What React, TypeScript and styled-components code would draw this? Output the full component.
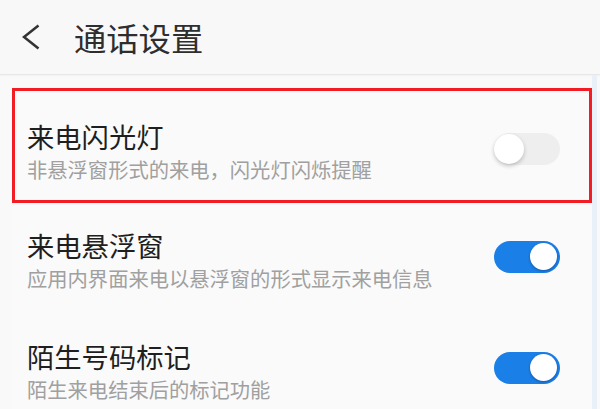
import React from "react";
import styled, { createGlobalStyle } from "styled-components";

const GlobalStyle = createGlobalStyle`
  html, body {
    margin: 0;
    padding: 0;
    background: #f9f9f9;
  }
  body {
    font-family: "Noto Sans CJK SC", "Noto Sans", "Liberation Sans", sans-serif;
  }
`;

const Screen = styled.div`
  width: 600px;
  height: 409px;
  overflow: hidden;
  display: flex;
  flex-direction: column;
  background: #f9f9f9;
`;

const Header = styled.header`
  height: 74px;
  flex: none;
  display: flex;
  align-items: center;
  padding-left: 22px;
  background: #f8f8f8;
  border-bottom: 1px solid #e7e7e7;
  box-shadow: 0 1px 2px rgba(0, 0, 0, 0.03);
`;

const BackIcon = styled.svg`
  width: 18px;
  height: 26px;
  flex: none;
  display: block;
`;

const Title = styled.h1`
  margin: 0 0 0 34px;
  font-size: 32.3px;
  line-height: 1;
  font-weight: 400;
  color: #2e2e2e;
`;

const Body = styled.div`
  flex: 1;
  display: flex;
  min-height: 0;
`;

const List = styled.div`
  flex: 1;
  display: flex;
  flex-direction: column;
  padding: 13px 0 0 12px;
`;

const ScrollStrip = styled.div`
  width: 5px;
  flex: none;
  margin-right: 3px;
  background: #eaf0f8;
`;

const Row = styled.div<{ $highlight?: boolean }>`
  display: flex;
  align-items: center;
  justify-content: space-between;
  padding: ${(p) => (p.$highlight ? "32px 32px 22px 15px" : "26px 32px 24px 15px")};
  background: #fafafa;
  outline: ${(p) => (p.$highlight ? "3px solid #f21d24" : "none")};
  outline-offset: -3px;
`;

const TextBlock = styled.div`
  display: flex;
  flex-direction: column;
  gap: 5px;
`;

const RowTitle = styled.div`
  font-size: 27.3px;
  line-height: 32px;
  color: #1f1f1f;
`;

const RowSub = styled.div`
  font-size: 20.3px;
  line-height: 24px;
  color: #a0a0a0;
`;

const Divider = styled.div`
  height: 1px;
  margin: 0 29px 0 8px;
  background: #ebebeb;
`;

const Track = styled.div<{ $on: boolean }>`
  width: 66px;
  height: 32px;
  box-sizing: border-box;
  flex: none;
  border-radius: 16px;
  display: flex;
  align-items: center;
  justify-content: ${(p) => (p.$on ? "flex-end" : "flex-start")};
  padding: ${(p) => (p.$on ? "0 3px" : "0")};
  margin-top: ${(p) => (p.$on ? "-6px" : "-4px")};
  background: ${(p) => (p.$on ? "#1b7fe8" : "#eeeeee")};
`;

const Knob = styled.div<{ $on: boolean }>`
  width: ${(p) => (p.$on ? "27px" : "30px")};
  height: ${(p) => (p.$on ? "27px" : "30px")};
  border-radius: 50%;
  background: #ffffff;
  box-shadow: ${(p) =>
    p.$on ? "0 1px 3px rgba(0,0,0,0.3)" : "0 2px 4px rgba(0,0,0,0.22)"};
`;

const Toggle = ({ on }: { on: boolean }) => (
  <Track $on={on}>
    <Knob $on={on} />
  </Track>
);

type Item = { title: string; sub: string; on: boolean; highlight?: boolean; divider?: boolean };

const items: Item[] = [
  { title: "来电闪光灯", sub: "非悬浮窗形式的来电，闪光灯闪烁提醒", on: false, highlight: true },
  { title: "来电悬浮窗", sub: "应用内界面来电以悬浮窗的形式显示来电信息", on: true, divider: true },
  { title: "陌生号码标记", sub: "陌生来电结束后的标记功能", on: true },
];

export default function App() {
  return (
    <>
      <GlobalStyle />
      <Screen>
        <Header>
          <BackIcon viewBox="0 0 18 26">
            <path
              d="M16.5 1.5 L2 13 L16.5 24.5"
              fill="none"
              stroke="#333333"
              strokeWidth="2.6"
              strokeLinejoin="miter"
            />
          </BackIcon>
          <Title>通话设置</Title>
        </Header>
        <Body>
          <List>
            {items.map((it) => (
              <React.Fragment key={it.title}>
                <Row $highlight={it.highlight}>
                  <TextBlock>
                    <RowTitle>{it.title}</RowTitle>
                    <RowSub>{it.sub}</RowSub>
                  </TextBlock>
                  <Toggle on={it.on} />
                </Row>
                {it.divider && <Divider />}
              </React.Fragment>
            ))}
          </List>
          <ScrollStrip />
        </Body>
      </Screen>
    </>
  );
}
